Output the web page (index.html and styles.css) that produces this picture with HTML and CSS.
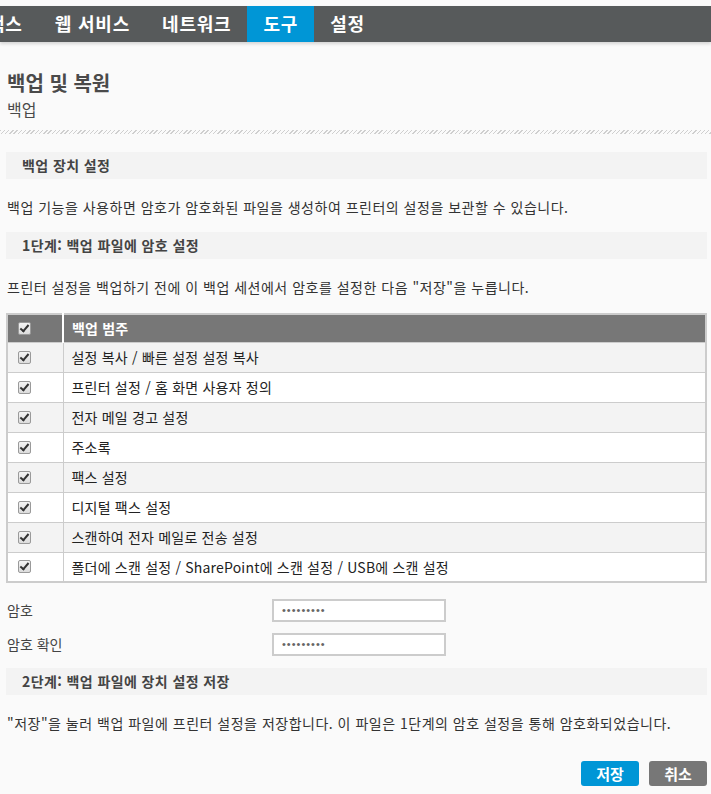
FILE: index.html
```html
<!DOCTYPE html>
<html lang="ko">
<head>
  <meta charset="UTF-8">
  <title>백업 및 복원</title>
  <link rel="stylesheet" href="styles.css">
</head>
<body>
<div class="nav">
  <ul>
    <li>팩스</li>
    <li>웹 서비스</li>
    <li>네트워크</li>
    <li class="active">도구</li>
    <li>설정</li>
  </ul>
</div>

<div class="head">
  <h1>백업 및 복원</h1>
  <h2>백업</h2>
</div>
<div class="hatch"></div>

<div class="content">
  <h3 class="section">백업 장치 설정</h3>
  <p class="text">백업 기능을 사용하면 암호가 암호화된 파일을 생성하여 프린터의 설정을 보관할 수 있습니다.</p>

  <h3 class="section">1단계: 백업 파일에 암호 설정</h3>
  <p class="text">프린터 설정을 백업하기 전에 이 백업 세션에서 암호를 설정한 다음 "저장"을 누릅니다.</p>

  <table class="cats">
    <tr class="th">
      <td class="chk"><span class="box"></span></td>
      <td>백업 범주</td>
    </tr>
    <tr><td class="chk"><span class="box"></span></td><td>설정 복사 / 빠른 설정 설정 복사</td></tr>
    <tr><td class="chk"><span class="box"></span></td><td>프린터 설정 / 홈 화면 사용자 정의</td></tr>
    <tr><td class="chk"><span class="box"></span></td><td>전자 메일 경고 설정</td></tr>
    <tr><td class="chk"><span class="box"></span></td><td>주소록</td></tr>
    <tr><td class="chk"><span class="box"></span></td><td>팩스 설정</td></tr>
    <tr><td class="chk"><span class="box"></span></td><td>디지털 팩스 설정</td></tr>
    <tr><td class="chk"><span class="box"></span></td><td>스캔하여 전자 메일로 전송 설정</td></tr>
    <tr><td class="chk"><span class="box"></span></td><td>폴더에 스캔 설정 / SharePoint에 스캔 설정 / USB에 스캔 설정</td></tr>
  </table>

  <div class="field first">
    <label>암호</label>
    <input type="password" value="123456789">
  </div>
  <div class="field">
    <label>암호 확인</label>
    <input type="password" value="123456789">
  </div>

  <h3 class="section">2단계: 백업 파일에 장치 설정 저장</h3>
  <p class="text">"저장"을 눌러 백업 파일에 프린터 설정을 저장합니다. 이 파일은 1단계의 암호 설정을 통해 암호화되었습니다.</p>

  <div class="buttons">
    <span class="btn save">저장</span>
    <span class="btn cancel">취소</span>
  </div>
</div>
</body>
</html>
```

FILE: styles.css
```css
*{
    margin: 0;
    padding: 0;
    box-sizing: border-box;
}
body{
    background: #fafafa;
    font-family: "Noto Sans CJK KR", "Noto Sans", sans-serif;
    color: #333;
    font-size: 14px;
    width: 711px;
    overflow: hidden;
}
.nav{
    margin-top: 6px;
    height: 36px;
    background: #575a5b;
    box-shadow: 0 2px 3px rgba(0,0,0,0.15);
}
.nav ul{
    list-style: none;
    display: flex;
    margin-left: -28px;
}
.nav li{
    height: 36px;
    line-height: 34px;
    padding: 0 16px;
    color: #fff;
    font-size: 18px;
    letter-spacing: 0.8px;
    font-weight: bold;
}
.nav li.active{
    background: #0096d6;
}
.head{
    padding: 26px 7px 0;
    height: 88px;
    color: #4a4a4a;
}
.head h1{
    font-size: 20px;
    line-height: 30px;
}
.head h2{
    font-size: 16px;
    font-weight: normal;
    line-height: 22px;
}
.hatch{
    height: 4px;
    background: repeating-linear-gradient(135deg, #cfcfcf 0 1px, #fafafa 1px 3px);
}
.content{
    padding: 18px 4px 0 6px;
}
.section{
    background: #f3f3f3;
    height: 27px;
    line-height: 27px;
    padding-left: 16px;
    font-size: 14px;
    letter-spacing: 0.4px;
    font-weight: bold;
    color: #444;
}
.text{
    padding: 0 1px;
    line-height: 20px;
    margin: 18px 0 15px;
    font-size: 14px;
    letter-spacing: 0.5px;
}
.cats{
    width: 701px;
    border-collapse: collapse;
    border: 2px solid #cccccc;
    margin-top: 16px;
}
.cats td{
    height: 30px;
    border-top: 1px solid #cccccc;
    padding-left: 8px;
    font-size: 14px;
    letter-spacing: 0.2px;
    color: #222;
}
.cats td.chk{
    width: 56px;
    padding-left: 10px;
    border-right: 1px solid #cccccc;
}
.cats tr:nth-child(even) td{
    background: #f3f3f3;
}
.cats tr:nth-child(odd) td{
    background: #ffffff;
}
.cats tr.th td{
    background: #777777;
    color: #fff;
    font-weight: bold;
    height: 28px;
    border-top: 0;
}
.cats tr.th td.chk{
    border-right: 2px solid #fff;
}
.box{
    display: block;
    width: 13px;
    height: 13px;
    border: 1px solid #9a9a9a;
    border-radius: 2px;
    background: linear-gradient(#f4f4f4, #dcdcdc);
    position: relative;
}
.box::after{
    content: "";
    position: absolute;
    left: 3px;
    top: 0px;
    width: 3px;
    height: 7px;
    border: solid #333;
    border-width: 0 2px 2px 0;
    transform: rotate(40deg);
}
.field{
    display: flex;
    align-items: center;
    height: 34px;
}
.field.first{
    margin-top: 10px;
}
.field label{
    width: 266px;
    padding-left: 1px;
    font-size: 14px;
    color: #444;
}
.field input{
    width: 174px;
    height: 23px;
    border: 2px solid #cccccc;
    background: #fff;
    padding-left: 8px;
    font-size: 11px;
    color: #666;
    letter-spacing: 1px;
}
.field + .section{
    margin-top: 7px;
}
.buttons{
    display: flex;
    justify-content: flex-end;
    gap: 10px;
    margin-top: 28px;
}
.btn{
    width: 58px;
    height: 25px;
    line-height: 25px;
    text-align: center;
    color: #fff;
    font-size: 15px;
    font-weight: bold;
    border-radius: 3px;
}
.save{
    background: #0096d6;
}
.cancel{
    background: #777777;
}
```
